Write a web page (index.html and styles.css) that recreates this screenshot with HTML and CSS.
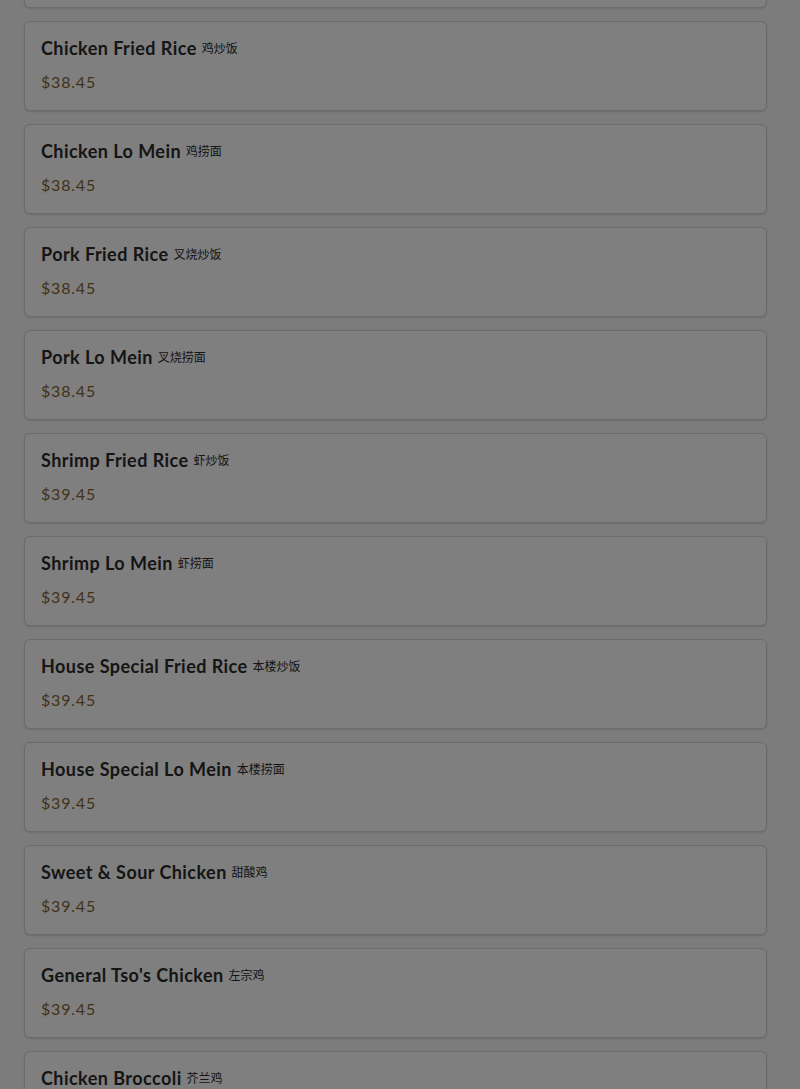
FILE: index.html
```html
<!DOCTYPE html>
<html lang="en">
<head>
    <meta charset="UTF-8">
    <meta name="viewport" content="width=device-width, initial-scale=1.0">
    <title>Menu - Fried Rice &amp; Lo Mein</title>
    <link rel="stylesheet" href="styles.css">
</head>
<body>
    <div class="menu-list">
        <!-- previous item, scrolled out of view -->
        <div class="menu-item menu-item-clipped"></div>
        <div class="menu-item">
            <div class="item-name">Chicken Fried Rice <span class="zh">鸡炒饭</span></div>
            <div class="item-price">$38.45</div>
        </div>
        <div class="menu-item">
            <div class="item-name">Chicken Lo Mein <span class="zh">鸡捞面</span></div>
            <div class="item-price">$38.45</div>
        </div>
        <div class="menu-item">
            <div class="item-name">Pork Fried Rice <span class="zh">叉烧炒饭</span></div>
            <div class="item-price">$38.45</div>
        </div>
        <div class="menu-item">
            <div class="item-name">Pork Lo Mein <span class="zh">叉烧捞面</span></div>
            <div class="item-price">$38.45</div>
        </div>
        <div class="menu-item">
            <div class="item-name">Shrimp Fried Rice <span class="zh">虾炒饭</span></div>
            <div class="item-price">$39.45</div>
        </div>
        <div class="menu-item">
            <div class="item-name">Shrimp Lo Mein <span class="zh">虾捞面</span></div>
            <div class="item-price">$39.45</div>
        </div>
        <div class="menu-item">
            <div class="item-name">House Special Fried Rice <span class="zh">本楼炒饭</span></div>
            <div class="item-price">$39.45</div>
        </div>
        <div class="menu-item">
            <div class="item-name">House Special Lo Mein <span class="zh">本楼捞面</span></div>
            <div class="item-price">$39.45</div>
        </div>
        <div class="menu-item">
            <div class="item-name">Sweet &amp; Sour Chicken <span class="zh">甜酸鸡</span></div>
            <div class="item-price">$39.45</div>
        </div>
        <div class="menu-item">
            <div class="item-name">General Tso's Chicken <span class="zh">左宗鸡</span></div>
            <div class="item-price">$39.45</div>
        </div>
        <div class="menu-item">
            <div class="item-name">Chicken Broccoli <span class="zh">芥兰鸡</span></div>
            <div class="item-price">$39.45</div>
        </div>
    </div>

    <!-- dimmed backdrop (modal open) -->
    <div class="backdrop"></div>
</body>
</html>
```

FILE: styles.css
```css
body {
    margin: 0;
    background-color: #f8f8f8;
    font-family: 'Lato', 'Noto Sans CJK SC', sans-serif;
    color: #333;
}

.menu-list {
    display: flex;
    flex-direction: column;
    gap: 13px;
    margin-top: -82px;
    padding: 0 33px 0 24px;
}

.menu-item {
    background-color: #fff;
    border: 1px solid #d6d6d6;
    border-radius: 6px;
    box-shadow: 0 1px 2px rgba(0, 0, 0, 0.12);
    padding: 16px;
}

.menu-item-clipped {
    height: 56px;
}

.item-name {
    font-size: 18px;
    font-weight: 700;
    line-height: 20px;
    color: #2a2a2a;
    letter-spacing: 0.45px;
}

/* chinese name */
.zh {
    font-family: 'Noto Sans CJK SC', sans-serif;
    font-size: 12px;
    font-weight: 400;
    letter-spacing: 0;
    vertical-align: 2px;
}

.item-price {
    margin-top: 12px;
    font-size: 16px;
    line-height: 24px;
    color: #86642f;
    letter-spacing: 0.8px;
}

.backdrop {
    position: fixed;
    inset: 0;
    background-color: rgba(0, 0, 0, 0.5);
}
```
